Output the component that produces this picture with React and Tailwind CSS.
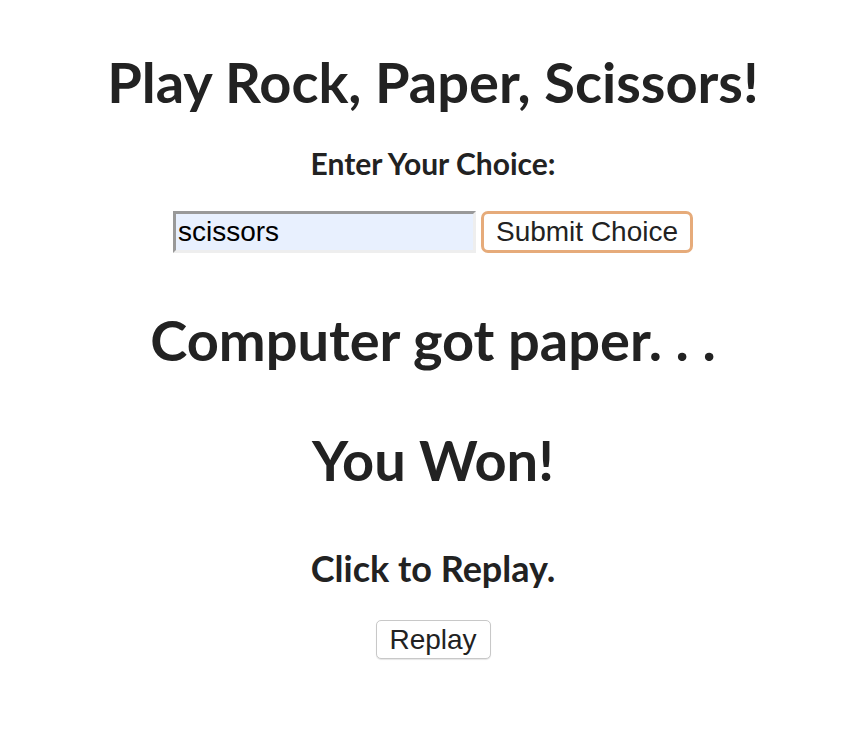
import React, { useState } from "react";

function App() {
  const [choice, setChoice] = useState("scissors");

  return (
    <div className="w-full min-h-screen bg-white text-[#222] flex flex-col items-center font-['Lato',sans-serif]">
      <h1 className="mt-[50px] text-[56px] font-bold leading-[64px]">
        Play Rock, Paper, Scissors!
      </h1>

      <h3 className="mt-[31px] text-[30px] font-bold leading-[36px]">
        Enter Your Choice:
      </h3>

      <form
        className="mt-[30px] flex items-center gap-[5px]"
        onSubmit={(e) => e.preventDefault()}
      >
        <input
          type="text"
          value={choice}
          onChange={(e) => setChoice(e.target.value)}
          className="w-[303px] h-[42px] bg-[#e8f0fe] border-[3px] border-t-[#999] border-l-[#999] border-b-[#eee] border-r-[#eee] px-[2px] text-[28px] text-black font-['Liberation_Sans',Arial,sans-serif] outline-none"
        />
        <button
          type="submit"
          className="w-[212px] h-[42px] bg-white border-[3px] border-[#e6ab7a] rounded-[7px] text-[28px] leading-none text-[#222] font-['Liberation_Sans',Arial,sans-serif]"
        >
          Submit Choice
        </button>
      </form>

      <h1 className="mt-[55px] text-[56px] font-bold leading-[64px]">
        Computer got paper. . .
      </h1>

      <h1 className="mt-[56px] text-[56px] font-bold leading-[64px]">
        You Won!
      </h1>

      <h2 className="mt-[54px] text-[36px] font-bold leading-[44px]">
        Click to Replay.
      </h2>

      <button className="mt-[30px] w-[115px] h-[39px] bg-white border border-[#c8c8c8] rounded-[5px] shadow-[0_1px_1px_rgba(0,0,0,0.1)] text-[28px] leading-none text-[#222] font-['Liberation_Sans',Arial,sans-serif]">
        Replay
      </button>
    </div>
  );
}

export default App;
